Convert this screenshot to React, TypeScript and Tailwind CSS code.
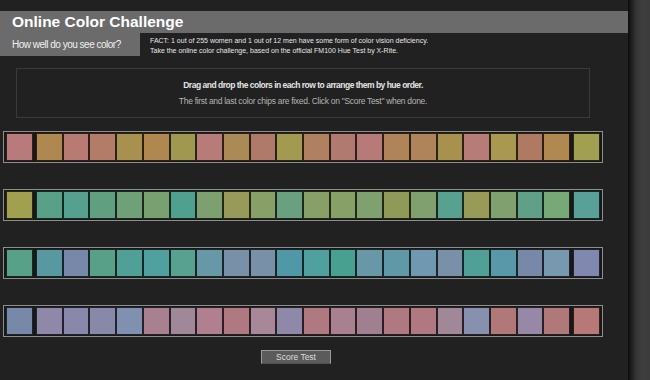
import React from "react";

const rows: string[][] = [
  [
    "#b87a7a",
    "#ae8850", "#b87a72", "#b27c68", "#a8904e", "#b0884f", "#a09850", "#b87c78", "#ac8a55", "#b07a6a", "#a29a50",
    "#b08060", "#b07a70", "#b87a78", "#b08458", "#b0845a", "#a8904e", "#b87c78", "#a89850", "#b07a62", "#b08850",
    "#a0a050",
  ],
  [
    "#a0a050",
    "#58a088", "#56a090", "#60a080", "#70a078", "#78a070", "#50a090", "#7ca070", "#989a5a", "#88a068", "#68a080",
    "#88a068", "#86a068", "#80a070", "#909a58", "#80a070", "#58a090", "#989a58", "#80a070", "#60a088", "#78a878",
    "#58a098",
  ],
  [
    "#58a088",
    "#5898a0", "#7888a8", "#58a088", "#50a098", "#50a0a0", "#58a090", "#6898a8", "#7890a8", "#7890a8", "#5098a8",
    "#50a0a0", "#48a090", "#6898a8", "#6098a8", "#7098b0", "#7890a8", "#50a098", "#5898a8", "#7888a8", "#7898b0",
    "#8088b0",
  ],
  [
    "#7888a8",
    "#9088a8", "#8a88aa", "#8888a8", "#8090b0", "#a88090", "#a08898", "#b08090", "#b07880", "#a88898", "#9088a8",
    "#b07880", "#a88090", "#a08090", "#b07880", "#b07880", "#a08898", "#8890b0", "#b07878", "#9888a8", "#b07878",
    "#b87878",
  ],
];

function Chip({ color, className }: { color: string; className?: string }) {
  return (
    <div
      className={"border border-black/75 " + (className ?? "")}
      style={{ backgroundColor: color }}
    />
  );
}

function ChipRow({ colors }: { colors: string[] }) {
  const first = colors[0];
  const last = colors[colors.length - 1];
  const middle = colors.slice(1, colors.length - 1);
  return (
    <div className="w-[600px] h-[32px] border border-[#8e8e8e] bg-[#181818] px-[2px] py-[1px] flex">
      <Chip color={first} className="w-[27px]" />
      <div className="ml-[3px] flex-1 flex">
        {middle.map((c, i) => (
          <Chip key={i} color={c} className="flex-1" />
        ))}
      </div>
      <Chip color={last} className="ml-[3px] w-[27px]" />
    </div>
  );
}

export default function App() {
  return (
    <div className="w-[650px] h-[380px] flex bg-[#212121] overflow-hidden font-['Liberation_Sans',Arial,sans-serif]">
      <div className="w-[628px] flex flex-col">
        <div className="h-[11px]" />
        <div className="h-[22px] bg-[#6b6b6b] flex items-center pl-[12px]">
          <h1 className="text-[15.5px] font-bold text-white leading-none">Online Color Challenge</h1>
        </div>
        <div className="flex h-[23px]">
          <div className="w-[140px] bg-[#6b6b6b] flex items-center pl-[12px] text-[10px] tracking-[-0.5px] text-[#f0f0f0] leading-none">
            How well do you see color?
          </div>
          <div className="pl-[10px] pt-[3px] text-[7px] leading-[10px] text-[#e6e6e6]">
            FACT: 1 out of 255 women and 1 out of 12 men have some form of color vision deficiency.
            <br />
            Take the online color challenge, based on the official FM100 Hue Test by X-Rite.
          </div>
        </div>
        <div className="mt-[12px] ml-[16px] w-[574px] h-[50px] border border-[#3a3a3a] text-center pt-[11px]">
          <div className="text-[8.5px] font-bold leading-[10px] tracking-[-0.5px] text-[#e4e4e4]">
            Drag and drop the colors in each row to arrange them by hue order.
          </div>
          <div className="mt-[6px] text-[8.5px] leading-[10px] tracking-[-0.3px] text-[#b4b4b4]">
            The first and last color chips are fixed. Click on "Score Test" when done.
          </div>
        </div>
        <div className="mt-[13px] ml-[3px] flex flex-col gap-[26px]">
          {rows.map((r, i) => (
            <ChipRow key={i} colors={r} />
          ))}
        </div>
        <button className="mt-[13px] ml-[261px] w-[70px] h-[14px] bg-[#5b5b5b] border border-[#9a9a9a] border-b-[#505050] text-[8.5px] text-[#dedede] flex items-center justify-center leading-none">
          Score Test
        </button>
      </div>
      <div className="flex-1 bg-[linear-gradient(to_right,#0c0c0c_0px,#1c1c1c_3px,#343434_8px,#3e3e3e_14px,#3c3c3c_22px)]" />
    </div>
  );
}
